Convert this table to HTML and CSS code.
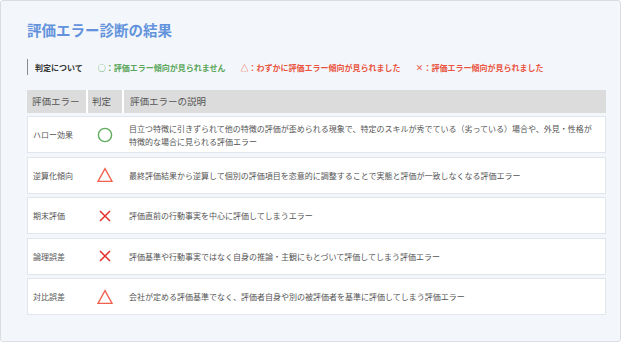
FILE: index.html
```html
<!DOCTYPE html>
<html lang="ja">
<head>
    <meta charset="UTF-8">
    <title>評価エラー診断の結果</title>
    <link rel="stylesheet" href="styles.css">
</head>
<body>
<div class="page">
    <h1 class="title">評価エラー診断の結果</h1>

    <div class="legend">
        <span class="legend-head">判定について</span>
        <span class="lg lg-ok">○：評価エラー傾向が見られません</span>
        <span class="lg lg-ng">△：わずかに評価エラー傾向が見られました</span>
        <span class="lg lg-ng">×：評価エラー傾向が見られました</span>
    </div>

    <div class="result">
        <div class="row head">
            <div class="c-name">評価エラー</div>
            <div class="c-mark">判定</div>
            <div class="c-desc">評価エラーの説明</div>
        </div>
        <div class="row">
            <div class="c-name">ハロー効果</div>
            <div class="c-mark"><svg width="16" height="16" viewBox="0 0 16 16"><circle cx="8" cy="8" r="6.6" fill="none" stroke="#5fae5f" stroke-width="1.4"/></svg></div>
            <div class="c-desc">目立つ特徴に引きずられて他の特徴の評価が歪められる現象で、特定のスキルが秀でている（劣っている）場合や、外見・性格が特徴的な場合に見られる評価エラー</div>
        </div>
        <div class="row">
            <div class="c-name">逆算化傾向</div>
            <div class="c-mark"><svg width="16" height="16" viewBox="0 0 16 16"><path d="M8 1.6 L15 14.4 L1 14.4 Z" fill="none" stroke="#f0604c" stroke-width="1.3" stroke-linejoin="miter"/></svg></div>
            <div class="c-desc">最終評価結果から逆算して個別の評価項目を恣意的に調整することで実態と評価が一致しなくなる評価エラー</div>
        </div>
        <div class="row">
            <div class="c-name">期末評価</div>
            <div class="c-mark"><svg width="16" height="16" viewBox="0 0 16 16"><path d="M3 3 L13 13 M13 3 L3 13" stroke="#e2322b" stroke-width="1.5"/></svg></div>
            <div class="c-desc">評価直前の行動事実を中心に評価してしまうエラー</div>
        </div>
        <div class="row">
            <div class="c-name">論理誤差</div>
            <div class="c-mark"><svg width="16" height="16" viewBox="0 0 16 16"><path d="M3 3 L13 13 M13 3 L3 13" stroke="#e2322b" stroke-width="1.5"/></svg></div>
            <div class="c-desc">評価基準や行動事実ではなく自身の推論・主観にもとづいて評価してしまう評価エラー</div>
        </div>
        <div class="row">
            <div class="c-name">対比誤差</div>
            <div class="c-mark"><svg width="16" height="16" viewBox="0 0 16 16"><path d="M8 1.6 L15 14.4 L1 14.4 Z" fill="none" stroke="#f0604c" stroke-width="1.3" stroke-linejoin="miter"/></svg></div>
            <div class="c-desc">会社が定める評価基準でなく、評価者自身や別の被評価者を基準に評価してしまう評価エラー</div>
        </div>
    </div>
</div>
</body>
</html>
```

FILE: styles.css
```css
/* 診断結果ページ */
:root {
    --bg: #f3f7fb; --line: #e1e6ec; --blue: #6393dc;
    --green: #5aa65a; --red: #ea5440; --text: #555;
}
body { margin: 0; font-family: "Noto Sans CJK JP", "Noto Sans", sans-serif; color: var(--text); }
.page { width: 621px; height: 342px; background: var(--bg); border: 1px solid #d9dde2; border-radius: 3px; padding: 0 14px 0 26px; box-sizing: border-box; }
.title { margin: 0; padding-top: 18px; font-size: 14.5px; line-height: 21px; color: var(--blue); font-weight: bold; }

.legend { display: flex; align-items: center; margin-top: 19px; height: 16px; border-left: 1.5px solid #8a8a8a; padding-left: 7px; font-size: 8px; font-weight: bold; }
.legend-head { color: #333; }
.lg { margin-left: 15px; }
.lg-ok { color: var(--green); }
.lg-ng { color: var(--red); }

.result { display: flex; flex-direction: column; gap: 3.5px; margin-top: 15px; width: 579px; }
.row { display: grid; grid-template-columns: 59px 36px 1fr; height: 37px; background: #fff; border: 1px solid var(--line); box-sizing: border-box; font-size: 8px; line-height: 13px; }
.row > div { display: flex; align-items: center; padding-left: 5px; }
.row .c-mark { justify-content: center; padding-left: 0; }
.row .c-desc { padding: 0 10px 0 6px; }

.head { height: 23px; background: #dcdcdc; border: none; font-size: 9.5px; margin-bottom: -0.5px; }
.head > div + div { border-left: 2px solid #fff; }
.head .c-mark { justify-content: flex-start; padding-left: 4px; }
```
